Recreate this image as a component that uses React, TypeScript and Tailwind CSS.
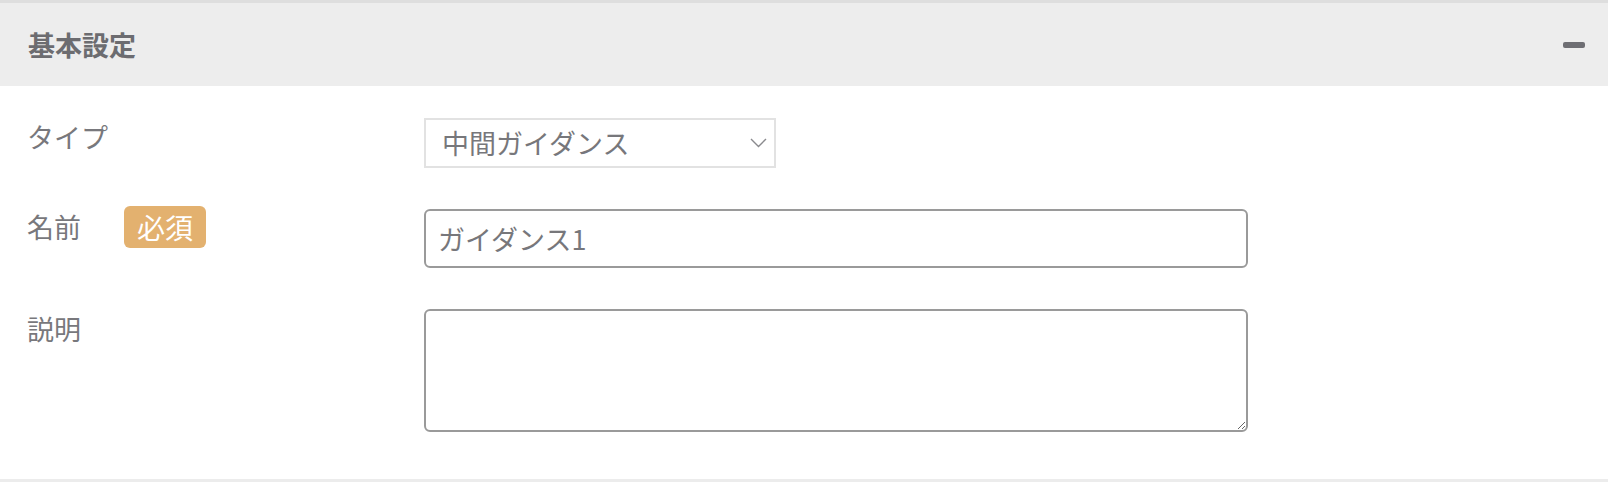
import React from "react";

const font = { fontFamily: '"Noto Sans CJK JP", "Noto Sans", sans-serif' };

function Chevron() {
  return (
    <svg width="17" height="10" viewBox="0 0 17 10" fill="none" className="pointer-events-none absolute right-[9px] top-[20px]">
      <path d="M1 1l7.5 7.5L16 1" stroke="#8a8a8e" strokeWidth="1.4" />
    </svg>
  );
}

export default function App() {
  return (
    <div className="w-[1608px] bg-white" style={font}>
      {/* Section header */}
      <div className="h-[86px] border-t-[3px] border-[#dedede] bg-[#ededed] flex items-center justify-between pl-[28px] pr-[23px]">
        <h2 className="text-[27px] font-bold text-[#6c6c70] leading-none">基本設定</h2>
        <span className="block w-[22px] h-[6px] rounded-[2px] bg-[#6e6e73]" />
      </div>

      {/* Body */}
      <div className="pt-[32px] pb-[47px] flex flex-col gap-[41px]">
        {/* Type */}
        <div className="flex items-start">
          <div className="w-[424px] pl-[27px] pt-[1px] text-[27px] leading-[36px] text-[#78787c]">タイプ</div>
          <div className="relative">
            <select
              defaultValue="mid"
              className="appearance-none w-[352px] h-[50px] border-2 border-[#e2e2e2] bg-white pl-[16px] pr-[36px] text-[27px] text-[#77777b] outline-none"
              style={font}
            >
              <option value="mid">中間ガイダンス</option>
            </select>
            <Chevron />
          </div>
        </div>

        {/* Name */}
        <div className="flex items-start">
          <div className="w-[424px] pl-[27px] flex items-center h-[42px] -mt-[3px]">
            <span className="text-[27px] leading-[36px] text-[#78787c]">名前</span>
            <span className="ml-[43px] h-[42px] px-[13px] rounded-[6px] bg-[#e3b16f] text-white text-[28px] leading-[42px]">必須</span>
          </div>
          <input
            defaultValue="ガイダンス1"
            className="w-[824px] h-[59px] border-2 border-[#9a9a9a] rounded-[6px] pl-[12px] text-[27px] text-[#77777b] outline-none"
            style={font}
          />
        </div>

        {/* Description */}
        <div className="flex items-start">
          <div className="w-[424px] pl-[27px] pt-[2px] text-[27px] leading-[36px] text-[#78787c]">説明</div>
          <textarea
            className="block w-[824px] h-[123px] border-2 border-[#9a9a9a] rounded-[6px] p-[10px] text-[27px] text-[#77777b] outline-none"
            style={font}
          />
        </div>
      </div>

      <div className="h-[3px] bg-[#ececec]" />
    </div>
  );
}
